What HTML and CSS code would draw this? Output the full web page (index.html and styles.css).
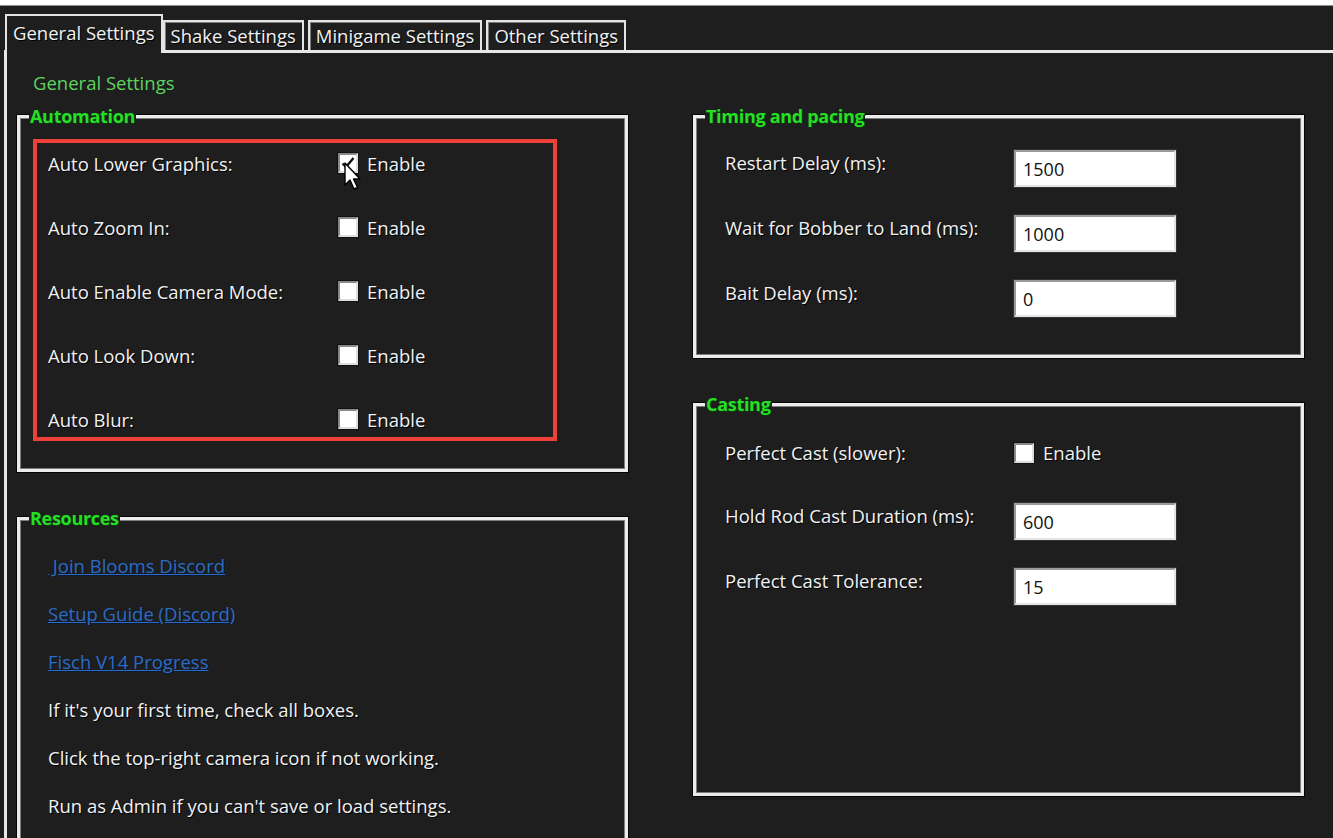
FILE: index.html
```html
<!DOCTYPE html>
<html>
<head>
<meta charset="utf-8">
<link rel="stylesheet" href="styles.css">
</head>
<body>
<div class="window">
  <div class="tabbar">
    <div class="tab active">General Settings</div>
    <div class="tab">Shake Settings</div>
    <div class="tab">Minigame Settings</div>
    <div class="tab">Other Settings</div>
  </div>
  <div class="panel">
    <div class="page-title">General Settings</div>
    <div class="columns">
      <div class="col">
        <fieldset class="group">
          <legend>Automation</legend>
          <div class="auto-body">
            <div class="highlight">
              <div class="row"><span class="lbl">Auto Lower Graphics:</span><span class="chk-wrap"><span class="chk checked"><svg class="tick" viewBox="0 0 16 16"><path d="M2.5 8.5 L6 12 L13.5 3" fill="none" stroke="#111" stroke-width="2.4"/></svg></span><svg class="cursor" viewBox="0 0 20 30"><path d="M1 1 L1 23 L6 18 L10 27 L13.5 25.5 L9.5 17 L16 17 Z" fill="#fff" stroke="#000" stroke-width="1.4" stroke-linejoin="round"/></svg><span class="chk-text">Enable</span></span></div>
              <div class="row"><span class="lbl">Auto Zoom In:</span><span class="chk-wrap"><span class="chk"></span><span class="chk-text">Enable</span></span></div>
              <div class="row"><span class="lbl">Auto Enable Camera Mode:</span><span class="chk-wrap"><span class="chk"></span><span class="chk-text">Enable</span></span></div>
              <div class="row"><span class="lbl">Auto Look Down:</span><span class="chk-wrap"><span class="chk"></span><span class="chk-text">Enable</span></span></div>
              <div class="row"><span class="lbl">Auto Blur:</span><span class="chk-wrap"><span class="chk"></span><span class="chk-text">Enable</span></span></div>
            </div>
          </div>
        </fieldset>
        <fieldset class="group resources">
          <legend>Resources</legend>
          <div class="res-body">
            <a class="link" href="#">&nbsp;Join Blooms Discord</a>
            <a class="link" href="#">Setup Guide (Discord)</a>
            <a class="link" href="#">Fisch V14 Progress</a>
            <div class="note">If it's your first time, check all boxes.</div>
            <div class="note">Click the top-right camera icon if not working.</div>
            <div class="note">Run as Admin if you can't save or load settings.</div>
          </div>
        </fieldset>
      </div>
      <div class="col">
        <fieldset class="group">
          <legend>Timing and pacing</legend>
          <div class="timing-body">
            <div class="frow"><span class="flbl">Restart Delay (ms):</span><input class="field" type="text" value="1500"></div>
            <div class="frow"><span class="flbl">Wait for Bobber to Land (ms):</span><input class="field" type="text" value="1000"></div>
            <div class="frow"><span class="flbl">Bait Delay (ms):</span><input class="field" type="text" value="0"></div>
          </div>
        </fieldset>
        <fieldset class="group">
          <legend>Casting</legend>
          <div class="casting-body">
            <div class="frow first"><span class="flbl">Perfect Cast (slower):</span><span class="chk-wrap"><span class="chk"></span><span class="chk-text">Enable</span></span></div>
            <div class="frow"><span class="flbl">Hold Rod Cast Duration (ms):</span><input class="field" type="text" value="600"></div>
            <div class="frow"><span class="flbl">Perfect Cast Tolerance:</span><input class="field" type="text" value="15"></div>
          </div>
        </fieldset>
      </div>
    </div>
  </div>
</div>
</body>
</html>
```

FILE: styles.css
```css
html, body {
  margin: 0;
  padding: 0;
  height: 838px;
  overflow: hidden;
  background: #1e1e1e;
}
body {
  font-family: "Open Sans", "Liberation Sans", sans-serif;
  font-size: 18.5px;
  color: #f2f2f2;
}
.window {
  border-top: 5px solid #ffffff;
  height: 833px;
}
.tabbar {
  border-top: 1px solid #8e8e8e;
  height: 44px;
  display: flex;
  align-items: flex-end;
  padding-left: 5px;
  gap: 4px;
  position: relative;
  z-index: 2;
}
.tab {
  height: 28px;
  line-height: 28px;
  padding: 0 6px;
  border: 2px solid #e4e4e4;
  border-bottom: none;
  box-shadow: inset 1px 1px 0 #7c7c7c;
  background: #1e1e1e;
  color: #f2f2f2;
  text-shadow: 1px 1px 0 #000;
  white-space: nowrap;
}
.tab.active {
  height: 37px;
  line-height: 34px;
  padding: 0 6px;
  margin-bottom: -3px;
  margin-right: -4px;
  box-shadow: none;
}
.panel {
  margin-left: 4px;
  border-top: 3px solid #e8e8e8;
  border-left: 3px solid #e8e8e8;
  height: 800px;
  padding-left: 10px;
  position: relative;
  z-index: 1;
}
.page-title {
  color: #5fd35f;
  line-height: 22px;
  margin-top: 19px;
  margin-left: 16px;
}
.columns {
  display: grid;
  grid-template-columns: 611px 611px;
  column-gap: 65px;
  margin-top: 12px;
}
.col {
  display: flex;
  flex-direction: column;
  gap: 36px;
}
.group {
  margin: 0;
  padding: 0;
  min-width: 0;
  border: 3px solid #ececec;
  box-shadow: inset 0 0 0 1px #7d7d7d, 0 0 0 1px #050505;
}
.group legend {
  margin-left: 9px;
  padding: 0 1px;
  font-weight: bold;
  color: #27de27;
  line-height: 20px;
  font-size: 18px;
  letter-spacing: -0.3px;
  background: #1e1e1e;
  text-shadow: 1px 1px 0 #0a3a0a;
}
.auto-body {
  padding: 13px 0 28px 13px;
}
.highlight {
  width: 505px;
  border: 4px solid #f0403a;
  padding: 2px 0 0 11px;
  display: flex;
  flex-direction: column;
  gap: 28px;
  box-sizing: content-box;
}
.row {
  height: 36px;
  display: flex;
  align-items: center;
}
.lbl {
  width: 290px;
  text-shadow: 1px 1px 0 #000;
}
.chk-wrap {
  display: flex;
  align-items: center;
  gap: 9px;
  position: relative;
}
.chk {
  width: 16px;
  height: 16px;
  background: #ffffff;
  border: 2px solid;
  border-color: #8a8a8a #dedede #dedede #8a8a8a;
  box-shadow: 0 0 0 1px #111;
  position: relative;
}
.tick {
  position: absolute;
  left: 0;
  top: 0;
  width: 16px;
  height: 16px;
}
.cursor {
  position: absolute;
  left: 6px;
  top: 11px;
  width: 20px;
  height: 30px;
}
.chk-text {
  text-shadow: 1px 1px 0 #000;
}
.resources {
  height: 420px;
}
.res-body {
  padding: 26px 0 0 28px;
  display: flex;
  flex-direction: column;
  gap: 24px;
  align-items: flex-start;
}
.link {
  color: #2f6bc0;
  line-height: 24px;
  text-decoration: underline;
  text-shadow: 1px 1px 0 #0b1a30;
}
.note {
  line-height: 24px;
  text-shadow: 1px 1px 0 #000;
}
.timing-body {
  padding: 24px 0 38px 29px;
  display: flex;
  flex-direction: column;
  gap: 28px;
}
.casting-body {
  padding: 20px 0 188px 29px;
  display: flex;
  flex-direction: column;
  gap: 28px;
}
.frow {
  height: 37px;
  display: flex;
  align-items: flex-start;
}
.frow.first {
  margin-bottom: 4px;
  align-items: center;
}
.flbl {
  width: 289px;
  line-height: 24px;
  margin-top: 1px;
  text-shadow: 1px 1px 0 #000;
}
.frow.first .flbl {
  margin-top: 0;
}
.field {
  width: 162px;
  height: 37px;
  box-sizing: border-box;
  margin: 0;
  padding: 0 0 0 7px;
  font-family: inherit;
  font-size: 18px;
  color: #111;
  background: #ffffff;
  border: 2px solid;
  border-color: #9a9a9a #e4e4e4 #e4e4e4 #9a9a9a;
  box-shadow: 0 0 0 1px #333;
  outline: none;
}
```
